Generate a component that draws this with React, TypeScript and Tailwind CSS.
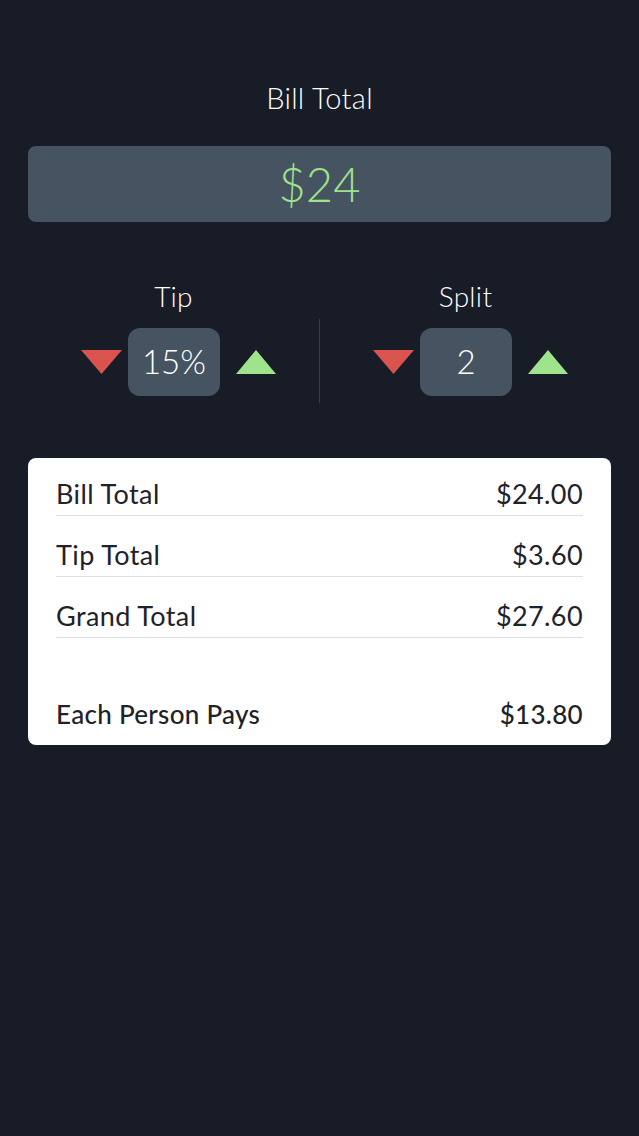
import React from "react";

type Row = { label: string; value: string };

const rows: Row[] = [
  { label: "Bill Total", value: "$24.00" },
  { label: "Tip Total", value: "$3.60" },
  { label: "Grand Total", value: "$27.60" },
];

function Down() {
  return (
    <svg width="41" height="24" viewBox="0 0 41 24" className="shrink-0">
      <polygon points="0,0 41,0 20.5,24" fill="#d9534f" />
    </svg>
  );
}

function Up() {
  return (
    <svg width="40" height="24" viewBox="0 0 40 24" className="shrink-0">
      <polygon points="0,24 40,24 20,0" fill="#9fe38d" />
    </svg>
  );
}

function Stepper({ label, value }: { label: string; value: string }) {
  return (
    <div className="flex-1 flex flex-col items-center">
      <div className="text-[28px] leading-[32px] font-light tracking-[0.3px] text-white">{label}</div>
      <div className="flex items-center mt-[16px] pl-[10px]">
        <Down />
        <div className="ml-[6px] w-[92px] h-[68px] rounded-[12px] bg-[#465361] flex items-center justify-center text-[33px] font-light text-white">
          {value}
        </div>
        <div className="ml-[16px]">
          <Up />
        </div>
      </div>
    </div>
  );
}

export default function App() {
  return (
    <div
      className="min-h-[1136px] w-full bg-[#181c27] px-[28px] flex flex-col"
      style={{ fontFamily: "Lato, 'Noto Sans', sans-serif" }}
    >
      <div className="pt-[82px] text-center text-[29px] leading-[32px] font-light tracking-[0.3px] text-white">
        Bill Total
      </div>
      <div className="mt-[32px] h-[76px] rounded-[8px] bg-[#465361] flex items-center justify-center text-[47px] font-light text-[#9ee28c]">
        $24
      </div>

      <div className="mt-[58px] flex items-end">
        <Stepper label="Tip" value="15%" />
        <div className="w-px h-[84px] bg-[#363d4a] mb-[-7px]" />
        <Stepper label="Split" value="2" />
      </div>

      <div className="mt-[62px] bg-white rounded-[8px] px-[28px] pb-[15px] text-[#1f2228]">
        {rows.map((r, i) => (
          <div
            key={r.label}
            className={`flex justify-between text-[27px] leading-[32px] tracking-[0.4px] pb-[5px] border-b border-[#dcdfe3] ${
              i === 0 ? "pt-[20px]" : "pt-[23px]"
            }`}
          >
            <span>{r.label}</span>
            <span>{r.value}</span>
          </div>
        ))}
        <div className="flex justify-between text-[26px] leading-[32px] font-medium tracking-[0.3px] pt-[60px]">
          <span>Each Person Pays</span>
          <span>$13.80</span>
        </div>
      </div>
    </div>
  );
}
